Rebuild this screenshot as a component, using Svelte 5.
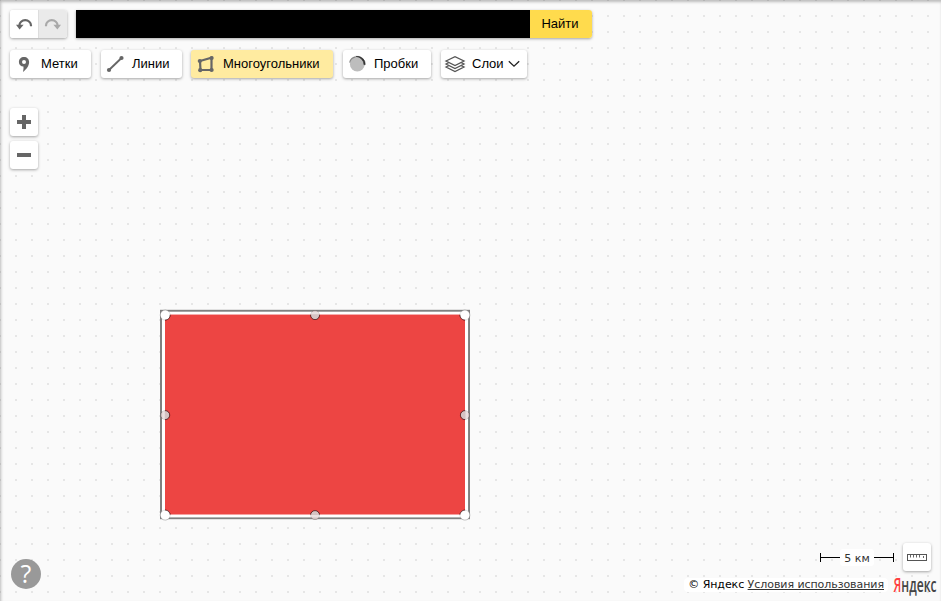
<script>
  const handles = [
    { x: 0, y: 0, corner: true },
    { x: 150, y: 0, corner: false },
    { x: 300, y: 0, corner: true },
    { x: 300, y: 100, corner: false },
    { x: 300, y: 200, corner: true },
    { x: 150, y: 200, corner: false },
    { x: 0, y: 200, corner: true },
    { x: 0, y: 100, corner: false }
  ];
</script>

<main class="map">
  <svg class="shape" width="314" height="214" viewBox="159 309 314 214" aria-hidden="true">
    <defs>
      <clipPath id="area"><rect x="165" y="315" width="300" height="199.5" /></clipPath>
    </defs>
    <rect x="161" y="310.8" width="308" height="207.4" fill="#fff" stroke="#808080" stroke-width="2" />
    <rect x="165" y="314.5" width="300" height="200" fill="#ed4543" />
    {#each handles as h}
      <circle
        cx={165.2 + h.x * 0.999}
        cy={315.1 + h.y}
        r={h.corner ? 5 : 4.5}
        fill={h.corner ? '#fff' : '#d5c3c3'}
        stroke="#000"
        stroke-opacity="0.22"
      />
      <circle
        cx={165.2 + h.x * 0.999}
        cy={315.1 + h.y}
        r={h.corner ? 5 : 4.5}
        fill="none"
        stroke="#300"
        stroke-opacity="0.55"
        clip-path="url(#area)"
      />
    {/each}
    <path d="M163.5 312v205M466.8 312v205M162 313h306M162 516.2h306" stroke="#fff" stroke-width="2.6" stroke-opacity="0.5" />
  </svg>

  <header>
    <div class="row">
      <div class="history">
        <button aria-label="Отменить">
          <svg width="28" height="28" viewBox="0 0 28 28"><path d="M9.4 16v-.6a5.8 5.2 0 0 1 11.6 0v.8" fill="none" stroke="#666" stroke-width="2.2" /><path d="M6 14.8h7.6L9.6 19.5z" fill="#666" /></svg>
        </button>
        <button class="off" aria-label="Повторить">
          <svg width="28" height="28" viewBox="0 0 28 28"><path d="M7 16.2v-.8a5.8 5.2 0 0 1 11.6 0v.6" fill="none" stroke="#a9a9a9" stroke-width="2.2" /><path d="M14.4 14.8H22L18.4 19.5z" fill="#a9a9a9" /></svg>
        </button>
      </div>
      <div class="search">
        <div class="field"></div>
        <button class="find">Найти</button>
      </div>
    </div>
    <div class="row tools">
      <button class="tool marks">
        <svg width="28" height="28" viewBox="0 0 28 28"><path d="M14 7c-3 0-5.1 2.1-5.1 4.9s2 4.5 4.5 4.6c.3 1.7 0 3.4-.4 5.4 3.4-2.8 6.1-6 6.1-10C19.1 9.1 17 7 14 7zm0 3a2 2 0 1 1 0 4 2 2 0 0 1 0-4z" fill="#666" /></svg>
        <span>Метки</span>
      </button>
      <button class="tool lines">
        <svg width="28" height="28" viewBox="0 0 28 28"><path d="M8 20 20.5 8" stroke="#666" stroke-width="1.9" /><circle cx="8" cy="20" r="2.1" fill="#666" /><circle cx="20.5" cy="8" r="2.1" fill="#666" /></svg>
        <span>Линии</span>
      </button>
      <button class="tool polygons">
        <svg width="28" height="28" viewBox="0 0 28 28"><path d="M9 11 20.5 7.8V20H9.5z" fill="none" stroke="#666" stroke-width="2.2" /><g fill="#666"><circle cx="8.8" cy="11" r="2.1" /><circle cx="20.6" cy="8" r="2.1" /><circle cx="20.6" cy="20" r="2.1" /><circle cx="9.2" cy="20.2" r="2.1" /></g></svg>
        <span>Многоугольники</span>
      </button>
      <button class="tool traffic">
        <svg width="28" height="28" viewBox="0 0 28 28"><circle cx="14.3" cy="14" r="7.4" fill="#bdbdbd" /><path d="M6.7 12.6A7.4 7.4 0 0 1 12.5 6.9" fill="none" stroke="#888" stroke-width="1.2" /><path d="M12.8 6.4a7.9 7.9 0 0 1 9.4 8.2l-1.2.2a8.600 8.600 0 0 0-8.200-8.400z" fill="#333" stroke="#333" stroke-width=".6" /></svg>
        <span>Пробки</span>
      </button>
      <button class="tool layers">
        <svg width="28" height="28" viewBox="0 0 28 28"><g fill="#fff" stroke="#555" stroke-width="1.3"><path d="m5 17 9-4.6 9 4.6-9 4.6z" /><path d="m5 14 9-4.6 9 4.6-9 4.6z" /><path d="m5 11 9-4.4 9 4.4-9 4.5z" /></g></svg>
        <span>Слои</span>
        <svg class="arrow" width="12" height="8" viewBox="0 0 12 8"><path d="m.8 1.2 5.2 5 5.2-5" fill="none" stroke="#222" stroke-width="1.3" /></svg>
      </button>
    </div>
  </header>

  <div class="zoom">
    <button aria-label="Приблизить"><svg width="28" height="28" viewBox="0 0 28 28"><path d="M12 7h4v5h5v4h-5v5h-4v-5H7v-4h5z" fill="#666" /></svg></button>
    <button aria-label="Отдалить"><svg width="28" height="28" viewBox="0 0 28 28"><path d="M7 12h14v4H7z" fill="#666" /></svg></button>
  </div>

  <footer>
    <button class="help" aria-label="Справка">?</button>
    <div class="info">
      <div class="scale-row">
        <div class="scale"><i class="left"></i><span>5 км</span><i class="right"></i></div>
        <button class="ruler" aria-label="Линейка">
          <svg width="28" height="28" viewBox="0 0 28 28"><rect x="4.5" y="11.5" width="19" height="6" fill="#fff" stroke="#555" /><path d="M7.5 12v2.5M10.5 12v2.5M13.5 12v2.5M16.5 12v2.5M20.5 13v2" stroke="#666" /></svg>
        </button>
      </div>
      <div class="legal">
        <div class="copy">© Яндекс <a href="#terms">Условия использования</a></div>
        <svg class="logo" width="44" height="24" viewBox="0 0 44 24">
          <text x="0.5" y="16.5" textLength="43" lengthAdjust="spacingAndGlyphs" fill="#444"><tspan fill="#ff4040">Я</tspan>ндекс</text>
        </svg>
      </div>
    </div>
  </footer>
</main>

<style>
  .map {
    position: relative;
    box-sizing: border-box;
    display: flex;
    flex-direction: column;
    width: 941px;
    height: 601px;
    padding: 10px 0 0 10px;
    overflow: hidden;
    background: #fafafa conic-gradient(from 0deg at 2px 2px, transparent 75%, #e6e6e6 0) 15px 15px / 16px 16px;
    box-shadow: inset 1px 2px 3px rgba(0, 0, 0, 0.25);
    font: 13px "Liberation Sans", Arial, sans-serif;
    color: #000;
  }
  .shape {
    position: absolute;
    left: 159px;
    top: 309px;
  }
  button {
    margin: 0;
    padding: 0;
    border: 0;
    font: inherit;
    color: inherit;
    background: #fff;
  }
  svg {
    display: block;
    flex: none;
  }
  header {
    display: flex;
    flex-direction: column;
    gap: 12px;
  }
  .row {
    display: flex;
    height: 28px;
  }
  .history,
  .search,
  .tool,
  .zoom button,
  .ruler {
    border-radius: 3px;
    box-shadow: 0 1px 3px rgba(0, 0, 0, 0.35);
  }
  .history {
    display: flex;
    width: 57px;
    margin-right: 9px;
    overflow: hidden;
    background: #fff;
  }
  .history .off {
    width: 29px;
    border-left: 1px solid #ddd;
    background: #eaeaea;
  }
  .search {
    display: flex;
    width: 516px;
    border-radius: 0 3px 3px 0;
  }
  .field {
    width: 454px;
    background: #000;
  }
  .find {
    width: 62px;
    padding: 0 2px 2px 0;
    border-radius: 0 3px 3px 0;
    background: #ffdb4d;
  }
  .tools {
    gap: 10px;
  }
  .tool {
    display: flex;
    align-items: center;
  }
  .tool span {
    margin-left: 3px;
    line-height: 28px;
    white-space: nowrap;
  }
  .marks { width: 81px; }
  .lines { width: 81px; }
  .polygons { width: 142px; margin-left: -1px; background: #ffeba0; }
  .polygons span { margin-left: 4px; }
  .traffic { width: 88px; }
  .layers { width: 86px; }
  .arrow { margin-left: 4px; }
  .zoom {
    display: flex;
    flex-direction: column;
    gap: 5px;
    width: 28px;
    margin-top: 30px;
  }
  .zoom button,
  .ruler {
    width: 28px;
    height: 28px;
  }
  footer {
    display: flex;
    justify-content: space-between;
    align-items: flex-end;
    margin-top: auto;
    padding: 0 4px 2px 1px;
  }
  .help {
    width: 30px;
    height: 30px;
    margin-bottom: 10px;
    padding-bottom: 2px;
    border-radius: 50%;
    background: #999;
    color: #fff;
    font: 25px/28px "Open Sans", sans-serif;
    text-align: center;
  }
  .info {
    display: flex;
    flex-direction: column;
    align-items: flex-end;
    gap: 4px;
    font: 11px/14px "DejaVu Sans", Verdana, sans-serif;
  }
  .scale-row {
    display: flex;
    align-items: center;
    gap: 9px;
    padding-right: 6px;
  }
  .scale {
    display: flex;
    align-items: center;
    width: 74px;
  }
  .scale i {
    flex: 1;
    height: 9px;
    background: linear-gradient(#000, #000) 0 4px / 100% 1px no-repeat;
  }
  .scale .left { border-left: 1px solid #000; }
  .scale .right { border-right: 1px solid #000; }
  .scale span {
    padding: 3px 4px 0;
    border-radius: 3px;
    background: #fff;
    color: #333;
  }
  .legal {
    display: flex;
    align-items: flex-start;
    gap: 5px;
  }
  .copy {
    margin-top: 3px;
    padding: 0 4px;
    border-radius: 4px;
    background: #fff;
    letter-spacing: -0.06px;
    white-space: nowrap;
  }
  .copy a {
    color: #333;
    text-decoration: underline;
  }
  .logo {
    overflow: visible;
    font: 600 20px/24px "Open Sans", "Noto Sans", sans-serif;
  }
</style>
